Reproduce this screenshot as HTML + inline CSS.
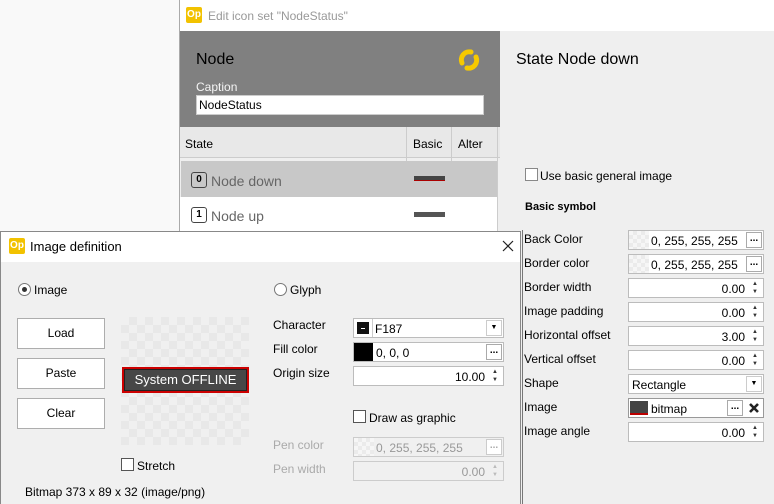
<!DOCTYPE html>
<html><head><meta charset="utf-8"><style>
*{box-sizing:border-box;margin:0;padding:0}
body{width:774px;height:504px;overflow:hidden;background:#f9f9f9;font-family:"Liberation Sans",Arial,sans-serif;font-size:12px;color:#000;position:relative}
.a{position:absolute}
.t{position:absolute;white-space:nowrap;line-height:14px}
.op{position:absolute;width:16px;height:16px;background:#f2c200;color:#fff;font-size:10px;font-weight:bold;text-align:center;line-height:16px;border-radius:2px}
.fld{position:absolute;background:#fff;border:1px solid #bcbcbc;height:20px}
.btn{position:absolute;background:#fff;border:1px solid #adadad;text-align:center;line-height:29px;font-size:12px}
.chk{position:absolute;width:13px;height:13px;border:1px solid #555;background:#fff}
.dots{position:absolute;right:1px;top:1px;width:16px;height:16px;border:1px solid #aaa;background:#fff;font-size:10px;text-align:center;line-height:12px;font-weight:bold}
.spin{position:absolute;right:1px;top:1px;width:14px;height:16px;font-size:6px;line-height:8px;text-align:center;color:#333}
.sw{position:absolute;left:0;top:0;width:20px;height:18px;background:repeating-conic-gradient(#ebebeb 0 25%,#f6f6f6 0 50%) 0 0/8px 8px}
.val{position:absolute;top:3px;font-size:12px;line-height:14px}
</style></head><body>
<div class="a" style="left:179px;top:0;width:595px;height:504px;background:#efefef;border-left:1px solid #aaa"></div>
<div class="a" style="left:180px;top:0;width:594px;height:31px;background:#fff"></div>
<div class="op" style="left:186px;top:7px">Op</div>
<div class="t" style="left:208px;top:9px;color:#999;font-size:12px">Edit icon set "NodeStatus"</div>
<div class="a" style="left:180px;top:31px;width:320px;height:96px;background:#808080"></div>
<div class="t" style="left:196px;top:51px;font-size:16px;line-height:18px">Node</div>
<svg class="a" style="left:456px;top:47px" width="26" height="26" viewBox="0 0 26 26"><path d="M6 16 A8 8 0 0 1 15 5" stroke="#f7c900" stroke-width="5" fill="none" stroke-linecap="round"/><path d="M20 10 A8 8 0 0 1 11 21" stroke="#f7c900" stroke-width="5" fill="none" stroke-linecap="round"/></svg>
<div class="t" style="left:196px;top:80px;color:#f4f4f4">Caption</div>
<div class="a" style="left:196px;top:95px;width:288px;height:20px;background:#fff;border:1px solid #ccc"></div>
<div class="t" style="left:199px;top:98px">NodeStatus</div>
<div class="a" style="left:180px;top:127px;width:320px;height:31px;background:#e8e8e8;border-bottom:1px solid #ccc"></div>
<div class="a" style="left:406px;top:127px;width:1px;height:104px;background:#ccc"></div>
<div class="a" style="left:451px;top:127px;width:1px;height:104px;background:#ccc"></div>
<div class="a" style="left:497px;top:127px;width:1px;height:104px;background:#ccc"></div>
<div class="t" style="left:185px;top:137px">State</div>
<div class="t" style="left:413px;top:137px">Basic</div>
<div class="t" style="left:458px;top:137px">Alter</div>
<div class="a" style="left:181px;top:161px;width:316px;height:36px;background:#c8c8c8"></div>
<div class="a" style="left:180px;top:197px;width:317px;height:34px;background:#fff"></div>
<div class="a" style="left:191px;top:172px;width:16px;height:16px;border:1.5px solid #444;border-radius:3px;font-size:10px;font-weight:bold;text-align:center;line-height:13px">0</div>
<div class="t" style="left:211px;top:173px;font-size:14px;line-height:16px;color:#666">Node down</div>
<div class="a" style="left:414px;top:176px;width:31px;height:5px;background:#444;border-bottom:1px solid #a00"></div>
<div class="a" style="left:191px;top:207px;width:16px;height:16px;border:1.5px solid #444;border-radius:3px;font-size:10px;font-weight:bold;text-align:center;line-height:13px">1</div>
<div class="t" style="left:211px;top:208px;font-size:14px;line-height:16px;color:#666">Node up</div>
<div class="a" style="left:414px;top:212px;width:31px;height:5px;background:#555"></div>
<div class="t" style="left:516px;top:51px;font-size:16px;line-height:18px">State Node down</div>
<div class="chk" style="left:525px;top:168px;border-color:#888"></div>
<div class="t" style="left:540px;top:169px">Use basic general image</div>
<div class="t" style="left:525px;top:200px;font-weight:bold;font-size:11px">Basic symbol</div>
<div class="a" style="left:522px;top:230px;width:1px;height:274px;background:#777"></div>

<div class="t" style="left:524px;top:232px">Back Color</div>
<div class="fld" style="left:628px;top:230px;width:136px"><div class="sw"></div><div class="val" style="left:22px">0, 255, 255, 255</div><div class="dots">...</div></div>
<div class="t" style="left:524px;top:256px">Border color</div>
<div class="fld" style="left:628px;top:254px;width:136px"><div class="sw"></div><div class="val" style="left:22px">0, 255, 255, 255</div><div class="dots">...</div></div>
<div class="t" style="left:524px;top:280px">Border width</div>
<div class="fld" style="left:628px;top:278px;width:136px"><div class="val" style="right:18px">0.00</div><div class="spin">▲<br>▼</div></div>
<div class="t" style="left:524px;top:304px">Image padding</div>
<div class="fld" style="left:628px;top:302px;width:136px"><div class="val" style="right:18px">0.00</div><div class="spin">▲<br>▼</div></div>
<div class="t" style="left:524px;top:328px">Horizontal offset</div>
<div class="fld" style="left:628px;top:326px;width:136px"><div class="val" style="right:18px">3.00</div><div class="spin">▲<br>▼</div></div>
<div class="t" style="left:524px;top:352px">Vertical offset</div>
<div class="fld" style="left:628px;top:350px;width:136px"><div class="val" style="right:18px">0.00</div><div class="spin">▲<br>▼</div></div>
<div class="t" style="left:524px;top:376px">Shape</div>
<div class="fld" style="left:628px;top:374px;width:136px"><div class="val" style="left:3px">Rectangle</div><div class="dots" style="font-size:7px;line-height:14px;border-color:#ccc">▼</div></div>
<div class="t" style="left:524px;top:400px">Image</div>
<div class="fld" style="left:628px;top:398px;width:136px;border-color:#999"><div class="a" style="left:1px;top:2px;width:18px;height:14px;background:#444;border-bottom:2px solid #b00"></div><div class="val" style="left:22px">bitmap</div><div class="dots" style="right:20px">...</div><svg class="a" style="right:4px;top:4px" width="10" height="10"><path d="M1 1L9 9M9 1L1 9" stroke="#222" stroke-width="2.6"/></svg></div>
<div class="t" style="left:524px;top:424px">Image angle</div>
<div class="fld" style="left:628px;top:422px;width:136px"><div class="val" style="right:18px">0.00</div><div class="spin">▲<br>▼</div></div>

<div class="a" style="left:0;top:231px;width:521px;height:273px;background:#f0f0f0;border:1px solid #888;border-bottom:none"></div>
<div class="a" style="left:1px;top:232px;width:519px;height:30px;background:#fff"></div>
<div class="op" style="left:9px;top:238px">Op</div>
<div class="t" style="left:30px;top:239px;font-size:13px;line-height:15px">Image definition</div>
<svg class="a" style="left:502px;top:240px" width="12" height="12"><path d="M1 1L11 11M11 1L1 11" stroke="#222" stroke-width="1.2"/></svg>
<div class="a" style="left:18px;top:283px;width:13px;height:13px;border:1px solid #777;border-radius:50%;background:#fff"><div class="a" style="left:3px;top:3px;width:5px;height:5px;border-radius:50%;background:#333"></div></div>
<div class="t" style="left:34px;top:283px">Image</div>
<div class="a" style="left:274px;top:283px;width:13px;height:13px;border:1px solid #777;border-radius:50%;background:#fff"></div>
<div class="t" style="left:290px;top:283px">Glyph</div>
<div class="btn" style="left:17px;top:318px;width:88px;height:31px">Load</div>
<div class="btn" style="left:17px;top:358px;width:88px;height:31px">Paste</div>
<div class="btn" style="left:17px;top:398px;width:88px;height:31px">Clear</div>
<div class="a" style="left:121px;top:317px;width:128px;height:128px;background:repeating-conic-gradient(#e8e8e8 0 25%,#f0f0f0 0 50%) 0 0/16px 16px"></div>
<div class="a" style="left:122px;top:367px;width:127px;height:26px;background:#c00;padding:2px"><div style="width:100%;height:100%;background:#474747;border:1px solid #222;color:#fff;font-size:13px;text-align:center;line-height:19px">System OFFLINE</div></div>
<div class="chk" style="left:121px;top:458px"></div>
<div class="t" style="left:137px;top:459px">Stretch</div>
<div class="t" style="left:25px;top:485px">Bitmap 373 x 89 x 32 (image/png)</div>
<div class="t" style="left:273px;top:318px">Character</div>
<div class="fld" style="left:353px;top:318px;width:151px"><div class="a" style="left:3px;top:3px;width:12px;height:12px;background:#111;border-top:3px solid #111"><div class="a" style="left:4px;top:3px;width:4px;height:1px;background:#fff"></div></div><div class="a" style="left:18px;top:0;width:1px;height:18px;background:#ccc"></div><div class="val" style="left:21px">F187</div><div class="dots" style="font-size:7px;line-height:14px;border-color:#ccc">▼</div></div>
<div class="t" style="left:273px;top:342px">Fill color</div>
<div class="fld" style="left:353px;top:342px;width:151px"><div class="a" style="left:0;top:0;width:19px;height:18px;background:#000"></div><div class="val" style="left:22px">0, 0, 0</div><div class="dots">...</div></div>
<div class="t" style="left:273px;top:366px">Origin size</div>
<div class="fld" style="left:353px;top:366px;width:151px"><div class="val" style="right:18px">10.00</div><div class="spin">▲<br>▼</div></div>
<div class="chk" style="left:353px;top:410px"></div>
<div class="t" style="left:369px;top:411px">Draw as graphic</div>
<div class="t" style="left:273px;top:438px;color:#aaa">Pen color</div>
<div class="fld" style="left:353px;top:437px;width:151px;background:#f0f0f0;border-color:#ccc"><div class="sw"></div><div class="val" style="left:22px;color:#999">0, 255, 255, 255</div><div class="dots" style="border-color:#ccc;color:#aaa">...</div></div>
<div class="t" style="left:273px;top:462px;color:#aaa">Pen width</div>
<div class="fld" style="left:353px;top:461px;width:151px;background:#f0f0f0;border-color:#ccc"><div class="val" style="right:18px;color:#999">0.00</div><div class="spin" style="color:#bbb">▲<br>▼</div></div>
</body></html>
